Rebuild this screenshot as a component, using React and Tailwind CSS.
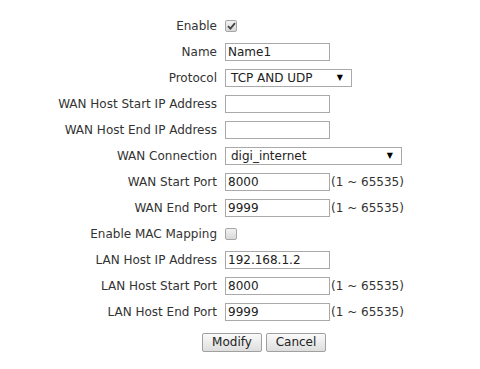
import React from "react";

const RANGE = "(1 ~ 65535)";

function Label({ children }) {
  return <div className="w-[218px] shrink-0 text-right pr-[1px]">{children}</div>;
}

function TextBox({ value = "", wide = false }) {
  return (
    <div className={`h-[18px] ${wide ? "w-[177px]" : "w-[105px]"} border border-[#a9a9a9] bg-white px-[2px] leading-[16px] text-[#222]`}>
      {value}
    </div>
  );
}

function SelectBox({ value, width }) {
  return (
    <div className={`h-[18px] ${width} border border-[#a9a9a9] bg-white pl-[5px] pr-[8px] flex items-center justify-between leading-[16px] text-[#222]`}>
      <span>{value}</span>
      <span className="text-[8px] text-black">▼</span>
    </div>
  );
}

function CheckBox({ checked }) {
  return (
    <div className="w-[12px] h-[12px] border border-[#a6a6a6] rounded-[2px] bg-gradient-to-b from-[#f2f2f2] to-[#d8d8d8] flex items-center justify-center">
      {checked && (
        <svg width="9" height="8" viewBox="0 0 9 8">
          <path d="M1 4.2 L3.4 6.6 L8 1.2" fill="none" stroke="#444" strokeWidth="1.8" />
        </svg>
      )}
    </div>
  );
}

function Row({ label, children }) {
  return (
    <div className="flex items-center h-[26px]">
      <Label>{label}</Label>
      <div className="ml-[7px] flex items-center">{children}</div>
    </div>
  );
}

function Btn({ children, w }) {
  return (
    <button className={`${w} h-[19px] border border-[#a0a0a0] rounded-[2px] bg-gradient-to-b from-[#fafafa] to-[#dedede] text-[#222] leading-[17px]`}>
      {children}
    </button>
  );
}

export default function App() {
  return (
    <div className="w-[480px] h-[369px] bg-white text-[12px] text-[#333] pt-[13px]" style={{ fontFamily: "Tahoma, 'DejaVu Sans', sans-serif" }}>
      <Row label="Enable"><CheckBox checked /></Row>
      <Row label="Name"><TextBox value="Name1" /></Row>
      <Row label="Protocol"><SelectBox value="TCP AND UDP" width="w-[127px]" /></Row>
      <Row label="WAN Host Start IP Address"><TextBox /></Row>
      <Row label="WAN Host End IP Address"><TextBox /></Row>
      <Row label="WAN Connection"><SelectBox value="digi_internet" width="w-[177px]" /></Row>
      <Row label="WAN Start Port"><TextBox value="8000" /><span className="ml-[1px]">{RANGE}</span></Row>
      <Row label="WAN End Port"><TextBox value="9999" /><span className="ml-[1px]">{RANGE}</span></Row>
      <Row label="Enable MAC Mapping"><CheckBox /></Row>
      <Row label="LAN Host IP Address"><TextBox value="192.168.1.2" /></Row>
      <Row label="LAN Host Start Port"><TextBox value="8000" /><span className="ml-[1px]">{RANGE}</span></Row>
      <Row label="LAN Host End Port"><TextBox value="9999" /><span className="ml-[1px]">{RANGE}</span></Row>
      <div className="flex justify-center gap-[4px] mt-[8px] pl-[48px]">
        <Btn w="w-[60px]">Modify</Btn>
        <Btn w="w-[60px]">Cancel</Btn>
      </div>
    </div>
  );
}
